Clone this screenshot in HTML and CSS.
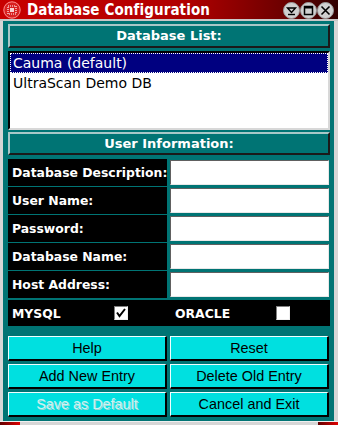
FILE: index.html
```html
<!DOCTYPE html>
<html lang="en">

<head>
    <meta charset="UTF-8">
    <meta name="viewport" content="width=device-width, initial-scale=1.0">
    <title>Database Configuration</title>
    <link rel="stylesheet" href="styles.css">
</head>

<body>
    <div class="window">
        <div class="titlebar">
            <svg class="app-icon" width="18" height="18" viewBox="0 0 18 18">
                <circle cx="9" cy="9" r="8.2" fill="#d82020" stroke="#ff9090" stroke-width="1"/>
                <rect x="5" y="5" width="8" height="8" fill="none" stroke="#fff" stroke-width="1.2" stroke-dasharray="1 1"/>
                <rect x="7" y="7" width="4" height="4" fill="#fff" opacity="0.8"/>
            </svg>
            <span class="title">Database Configuration</span>
            <div class="title-buttons">
                <svg width="17" height="17" viewBox="0 0 17 17">
                    <circle cx="8.5" cy="8.5" r="8" fill="#d0d0d0" stroke="#9a9a9a"/>
                    <path d="M4.5 6 L12.5 6 L8.5 10.5 Z" fill="none" stroke="#000" stroke-width="1.4"/>
                    <path d="M5 12.5 H12" stroke="#000" stroke-width="1.4"/>
                </svg>
                <svg width="17" height="17" viewBox="0 0 17 17">
                    <circle cx="8.5" cy="8.5" r="8" fill="#d0d0d0" stroke="#9a9a9a"/>
                    <rect x="4.5" y="4.5" width="8" height="8" fill="none" stroke="#000" stroke-width="1.5"/>
                    <path d="M4.5 5.5 H12.5" stroke="#000" stroke-width="2"/>
                </svg>
                <svg width="17" height="17" viewBox="0 0 17 17">
                    <circle cx="8.5" cy="8.5" r="8" fill="#d0d0d0" stroke="#9a9a9a"/>
                    <path d="M4.5 4.5 L12.5 12.5 M12.5 4.5 L4.5 12.5" stroke="#000" stroke-width="1.6"/>
                </svg>
            </div>
        </div>

        <div class="client">
            <div class="banner">Database List:</div>

            <div class="listbox">
                <div class="item selected">Cauma (default)</div>
                <div class="item">UltraScan Demo DB</div>
            </div>

            <div class="banner banner-user">User Information:</div>

            <div class="fields">
                <div class="label">Database Description:</div>
                <input class="field" type="text">
                <div class="label">User Name:</div>
                <input class="field" type="text">
                <div class="label">Password:</div>
                <input class="field" type="password">
                <div class="label">Database Name:</div>
                <input class="field" type="text">
                <div class="label">Host Address:</div>
                <input class="field" type="text">
            </div>

            <div class="driver-row">
                <span class="driver">MYSQL</span>
                <span class="check">
                    <svg width="12" height="12" viewBox="0 0 12 12">
                        <path d="M2 5.5 L4.5 9 L10 2" fill="none" stroke="#000" stroke-width="2"/>
                    </svg>
                </span>
                <span class="driver">ORACLE</span>
                <span class="check"></span>
            </div>

            <div class="buttons">
                <button>Help</button>
                <button>Reset</button>
                <button>Add New Entry</button>
                <button>Delete Old Entry</button>
                <button class="disabled">Save as Default</button>
                <button>Cancel and Exit</button>
            </div>
        </div>

        <div class="bottom-edge">
            <span class="grip"></span>
            <span class="grip"></span>
        </div>
    </div>
</body>

</html>
```

FILE: styles.css
```css
body {
    margin: 0;
    font-family: "DejaVu Sans", sans-serif;
    background: #d6d6d6;
}

.window {
    width: 338px;
    height: 425px;
    background: #d6d6d6;
    display: flex;
    flex-direction: column;
}

.titlebar {
    height: 19px;
    display: flex;
    align-items: center;
    background: linear-gradient(to right, #c80000 0%, #b00000 55%, #6a0000 85%, #300000 100%);
    border-bottom: 2px solid #c8c8c8;
}

.app-icon {
    margin-left: 3px;
}

.title {
    margin-left: 6px;
    color: #fff;
    font-family: "DejaVu Sans Condensed", "DejaVu Sans", sans-serif;
    font-stretch: condensed;
    font-weight: bold;
    font-size: 15px;
    letter-spacing: 0.1px;
}

.title-buttons {
    margin-left: auto;
    margin-right: 4px;
    display: flex;
    padding-top: 2px;
}

.client {
    flex: 1;
    margin: 0 4px 0 3px;
    background: #007474;
    padding: 3px 4px 4px 5px;
    display: flex;
    flex-direction: column;
}

.banner {
    height: 20px;
    background: #007474;
    border: 2px solid;
    border-color: #a8c8c8 #1a1a1a #1a1a1a #a8c8c8;
    color: #fff;
    font-weight: bold;
    font-size: 13px;
    text-align: center;
    line-height: 20px;
}

.listbox {
    margin-top: 3px;
    height: 75px;
    background: #fff;
    border: 2px solid;
    border-color: #000 #d8d8d8 #d8d8d8 #000;
    font-size: 14px;
}

.item {
    height: 20px;
    line-height: 20px;
    padding-left: 3px;
    color: #000;
}

.selected {
    background: #000080;
    color: #fff;
    outline: 1px dotted #fff;
    outline-offset: -1px;
}

.banner-user {
    margin-top: 2px;
    height: 19px;
    line-height: 19px;
}

.fields {
    margin-top: 4px;
    display: grid;
    grid-template-columns: 159px 159px;
    grid-auto-rows: 27px;
    column-gap: 3px;
    row-gap: 1px;
}

.label {
    background: #000;
    color: #fff;
    font-weight: bold;
    font-size: 12.4px;
    line-height: 27px;
    padding-left: 4px;
    white-space: nowrap;
}

.field {
    margin: 1px 0 1px 0;
    border: 1px solid;
    border-color: #606060 #e8e8e8 #e8e8e8 #606060;
    background: #fff;
    padding: 0;
    height: 25px;
    box-sizing: border-box;
}

.driver-row {
    margin-top: 2px;
    height: 26px;
    background: #000;
    display: grid;
    grid-template-columns: 106px 57px 105px 53px;
    align-items: center;
    color: #fff;
    font-weight: bold;
    font-size: 12.4px;
}

.driver {
    padding-left: 4px;
}

.check {
    width: 12px;
    height: 12px;
    background: #fff;
    border: 1px solid;
    border-color: #808080 #f0f0f0 #f0f0f0 #808080;
    display: flex;
}

.buttons {
    margin-top: 10px;
    display: grid;
    grid-template-columns: 159px 159px;
    grid-auto-rows: 25px;
    column-gap: 3px;
    row-gap: 3px;
}

button {
    background: #00e0e0;
    border: 2px solid;
    border-color: #f0ffff #000 #000 #f0ffff;
    border-width: 1px 2px 2px 1px;
    font-family: "Liberation Sans", Arial, sans-serif;
    font-size: 14.4px;
    color: #000;
    padding: 0;
}

button.disabled {
    color: #c8f4f4;
    text-shadow: 1px 1px 0 #9ad8d8;
}

.bottom-edge {
    height: 4px;
    display: flex;
    justify-content: space-between;
    border-top: 1px solid #f0f0f0;
}

.grip {
    width: 20px;
    height: 3px;
    background: linear-gradient(to right, #600000, #e00000);
}
```
